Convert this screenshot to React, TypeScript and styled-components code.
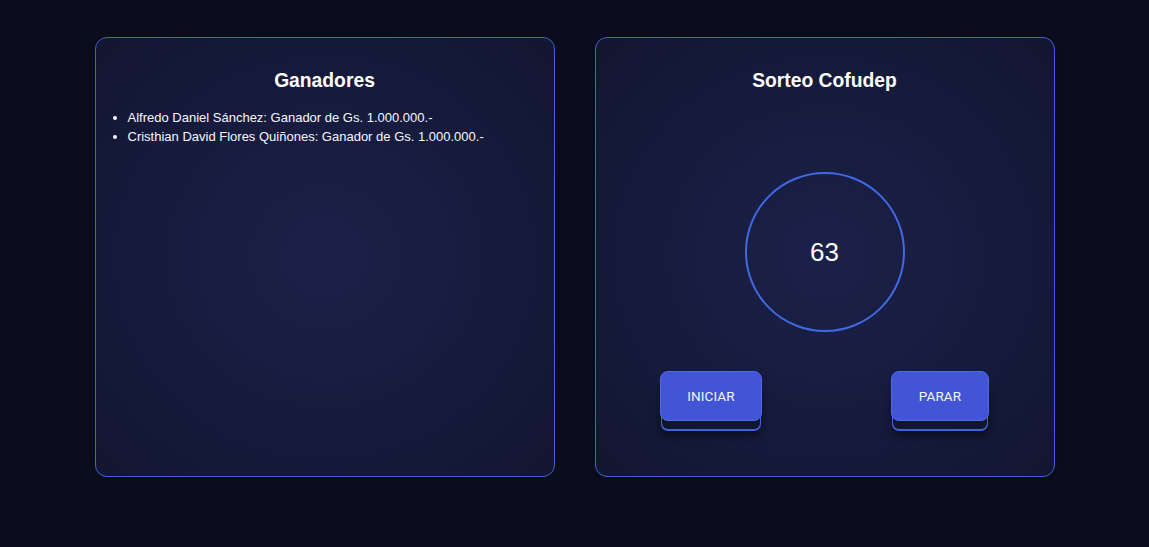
import React from "react";
import styled, { createGlobalStyle } from "styled-components";

const Global = createGlobalStyle`
  html, body { margin: 0; padding: 0; background: #0c0e1f; }
  body { font-family: "Liberation Sans", Arial, sans-serif; color: #ffffff; }
  * { box-sizing: border-box; }
`;

const Page = styled.div`
  width: 1149px;
  height: 547px;
  display: flex;
  justify-content: center;
  align-items: flex-start;
  gap: 40px;
  padding-top: 37px;
  background: #0c0e1f;
`;

const Panel = styled.section`
  width: 460px;
  height: 440px;
  border: 1px solid #3d63d8;
  border-radius: 12px;
  background: radial-gradient(ellipse at center, #1b2149 0%, #161b3d 55%, #121630 100%);
  box-shadow: 0 0 20px rgba(0, 0, 0, 0.35);
  padding: 30px 20px 20px;
  display: flex;
  flex-direction: column;
  align-items: stretch;
`;

const Title = styled.h2`
  margin: 0;
  text-align: center;
  font-size: 19.3px;
  font-weight: 700;
  line-height: 25px;
  color: #ffffff;
`;

const List = styled.ul`
  margin: 15px 0 0;
  padding-left: 12px;
  font-size: 13px;
  line-height: 19px;
  color: #f6f7ff;
`;

const Item = styled.li`
  padding-left: 0;
`;

const Stage = styled.div`
  flex: 1;
  display: flex;
  flex-direction: column;
  align-items: center;
  padding-top: 79px;
`;

const Circle = styled.div`
  width: 160px;
  height: 160px;
  border-radius: 50%;
  border: 2px solid #4169e1;
  display: flex;
  align-items: center;
  justify-content: center;
  font-size: 26px;
  color: #ffffff;
`;

const Buttons = styled.div`
  display: flex;
  justify-content: center;
  gap: 129px;
  margin-top: 39px;
`;

const Button = styled.button<{ $w: number }>`
  width: ${(p) => p.$w}px;
  height: 50px;
  border-radius: 8px;
  border: 1px solid #4d6ce6;
  background: #4155d6;
  color: #f2f4ff;
  font-family: Roboto, "Liberation Sans", sans-serif;
  font-size: 13.5px;
  font-weight: 400;
  letter-spacing: 0.1px;
  cursor: pointer;
  box-shadow: 0 10px 0 -2px #12152f, 0 11px 0 -1px #3f62d8,
    0 15px 8px rgba(0, 0, 0, 0.45);
`;

export default function App() {
  return (
    <>
      <Global />
      <Page>
        <Panel>
          <Title>Ganadores</Title>
          <List>
            <Item>Alfredo Daniel Sánchez: Ganador de Gs. 1.000.000.-</Item>
            <Item>Cristhian David Flores Quiñones: Ganador de Gs. 1.000.000.-</Item>
          </List>
        </Panel>
        <Panel>
          <Title>Sorteo Cofudep</Title>
          <Stage>
            <Circle>63</Circle>
            <Buttons>
              <Button $w={102}>INICIAR</Button>
              <Button $w={98}>PARAR</Button>
            </Buttons>
          </Stage>
        </Panel>
      </Page>
    </>
  );
}
